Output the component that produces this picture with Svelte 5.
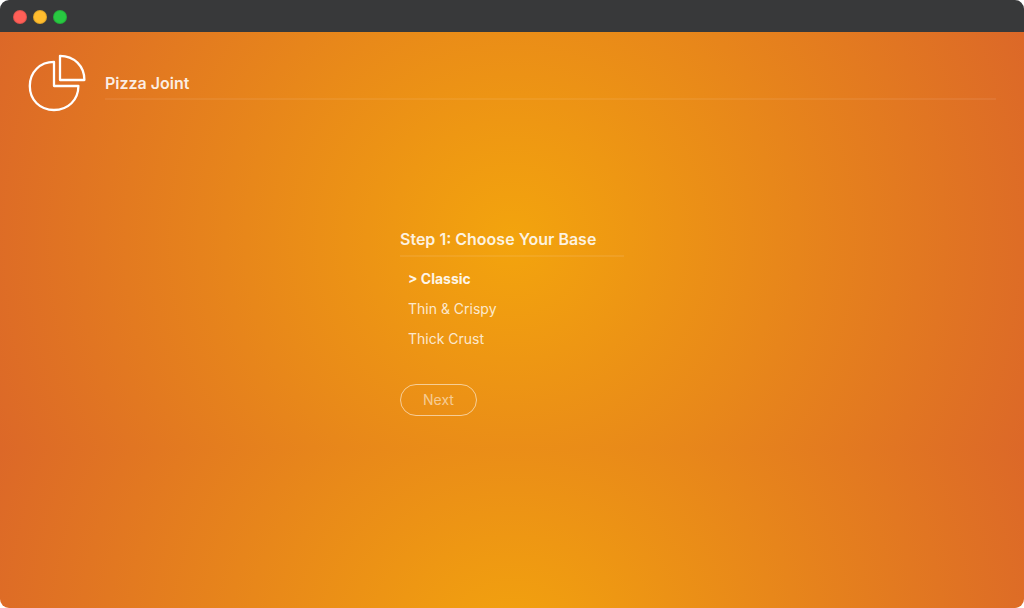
<script>
  const bases = ['Classic', 'Thin & Crispy', 'Thick Crust'];
  let selected = $state('Classic');
</script>

<div class="window">
  <div class="titlebar">
    <span class="light close"></span>
    <span class="light minimise"></span>
    <span class="light expand"></span>
  </div>

  <div class="page">
    <header>
      <svg class="logo" viewBox="0 0 64 64" aria-hidden="true">
        <path d="M33 39 H57.4 C57.4 53 47 63 33 63 C19 63 8.8 53 8.8 39 C8.8 25 19 14.9 33 14.9 Z" />
        <path d="M39 33 V8.8 C53 8.8 63.4 19 63.4 33 Z" />
      </svg>
      <h1>Pizza Joint</h1>
    </header>

    <main>
      <h2>Step 1: Choose Your Base</h2>
      <ul>
        {#each bases as base}
          <li>
            <button
              class="option"
              class:active={selected === base}
              aria-pressed={selected === base}
              onclick={() => (selected = base)}
            >{selected === base ? '> ' : ''}{base}</button>
          </li>
        {/each}
      </ul>
      <button class="next">Next</button>
    </main>
  </div>
</div>

<style>
  :global(body) {
    margin: 0;
    background: #fff;
  }

  .window {
    display: flex;
    flex-direction: column;
    min-height: 100vh;
    border-radius: 9px;
    overflow: hidden;
    color: #fff;
    font-family: Inter, "Open Sans", sans-serif;
  }

  .titlebar {
    display: flex;
    align-items: center;
    gap: 6px;
    height: 32px;
    padding: 2px 13px 0;
    box-sizing: border-box;
    background: #38393a;
  }

  .light {
    width: 14px;
    height: 14px;
    border-radius: 50%;
    box-sizing: border-box;
    border: 1px solid rgba(0, 0, 0, 0.12);
  }

  .close { background: #ff5f57; }
  .minimise { background: #ffbd2e; }
  .expand { background: #28c941; }

  .page {
    flex: 1;
    background: radial-gradient(circle, #f3a40d 0%, #dc6828 100%) 0 0 / 100% 416px;
  }

  header {
    display: flex;
    align-items: flex-end;
    gap: 20px;
    padding: 15px 28px 0 21px;
  }

  .logo {
    flex: none;
    width: 64px;
    height: 64px;
    overflow: visible;
    fill: none;
    stroke: #fff;
    stroke-width: 2.3;
    stroke-linejoin: round;
  }

  h1,
  h2 {
    margin: 0;
    font-size: 16px;
    line-height: 20px;
    font-weight: 600;
    color: rgba(255, 255, 255, 0.88);
  }

  h1 {
    flex: 1;
    margin-bottom: 11px;
    padding-bottom: 5px;
    border-bottom: 2px solid rgba(255, 238, 238, 0.07);
  }

  main {
    width: 224px;
    margin: 118px auto 0;
  }

  h2 {
    padding-bottom: 6px;
    border-bottom: 2px solid rgba(255, 238, 238, 0.09);
  }

  ul {
    list-style: none;
    margin: 7px 0 30px;
    padding: 0 8px;
  }

  button {
    font-family: inherit;
    font-size: 14px;
    line-height: 20px;
    background: none;
    color: inherit;
    cursor: pointer;
  }

  .option {
    display: block;
    padding: 5px 0;
    border: 0;
    color: rgba(255, 255, 255, 0.8);
  }

  .active {
    font-weight: 700;
    color: rgba(255, 255, 255, 0.92);
  }

  .next {
    display: block;
    padding: 5px 22px;
    border: 1px solid rgba(255, 255, 255, 0.55);
    border-radius: 16px;
    color: rgba(255, 255, 255, 0.55);
  }
</style>
